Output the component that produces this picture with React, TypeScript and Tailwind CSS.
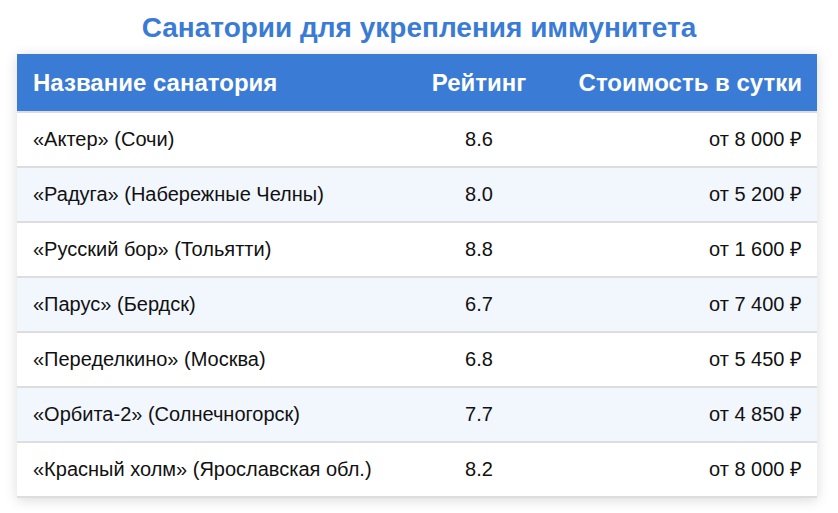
const rows = [
  { name: '«Актер» (Сочи)', rating: '8.6', price: 'от 8 000 ₽' },
  { name: '«Радуга» (Набережные Челны)', rating: '8.0', price: 'от 5 200 ₽' },
  { name: '«Русский бор» (Тольятти)', rating: '8.8', price: 'от 1 600 ₽' },
  { name: '«Парус» (Бердск)', rating: '6.7', price: 'от 7 400 ₽' },
  { name: '«Переделкино» (Москва)', rating: '6.8', price: 'от 5 450 ₽' },
  { name: '«Орбита-2» (Солнечногорск)', rating: '7.7', price: 'от 4 850 ₽' },
  { name: '«Красный холм» (Ярославская обл.)', rating: '8.2', price: 'от 8 000 ₽' },
];

export default function App() {
  return (
    <div className="min-h-screen bg-white px-[17px] pt-[12px] font-['Liberation_Sans',Arial,sans-serif]">
      <h1 className="mb-[10px] text-center text-[28px] font-bold leading-[32px] text-[#3a7bd5]">
        Санатории для укрепления иммунитета
      </h1>
      <table className="w-[800px] table-fixed border-collapse bg-white shadow-[0_2px_12px_rgba(0,0,0,0.15)]">
        <colgroup>
          <col className="w-[398px]" />
          <col className="w-[128px]" />
          <col className="w-[274px]" />
        </colgroup>
        <thead>
          <tr className="border-b-2 border-[#dddddd] bg-[#3a7bd5] text-white">
            <th className="px-4 py-[15px] text-left text-[24px] font-bold leading-[27px]">Название санатория</th>
            <th className="px-2 py-[15px] text-center text-[24px] font-bold leading-[27px]">Рейтинг</th>
            <th className="px-[15px] py-[15px] text-right text-[24px] font-bold leading-[27px]">Стоимость в сутки</th>
          </tr>
        </thead>
        <tbody>
          {rows.map((r, i) => (
            <tr key={i} className={`border-b-2 border-[#dddddd] ${i % 2 === 1 ? 'bg-[#f2f6fd]' : 'bg-white'}`}>
              <td className="px-4 py-[15px] text-left text-[20px] leading-[23px] text-[#111]">{r.name}</td>
              <td className="px-2 py-[15px] text-center text-[20px] leading-[23px] text-[#111]">{r.rating}</td>
              <td className="px-[15px] py-[15px] text-right text-[20px] leading-[23px] text-[#111]">{r.price}</td>
            </tr>
          ))}
        </tbody>
      </table>
    </div>
  );
}
